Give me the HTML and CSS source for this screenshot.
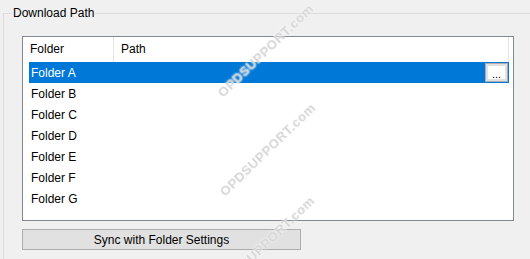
FILE: index.html
```html
<!DOCTYPE html>
<html lang="en">
<head>
    <meta charset="UTF-8">
    <title>Download Path</title>
    <link rel="stylesheet" href="styles.css">
</head>
<body>
    <div class="group">
        <span class="group-title">Download Path</span>
        <div class="list">
            <div class="list-header">
                <div class="col col-folder">Folder</div>
                <div class="col col-path">Path</div>
            </div>
            <div class="rows">
                <div class="row selected">
                    <span class="row-name">Folder A</span>
                    <button class="browse-btn">...</button>
                </div>
                <div class="row"><span class="row-name">Folder B</span></div>
                <div class="row"><span class="row-name">Folder C</span></div>
                <div class="row"><span class="row-name">Folder D</span></div>
                <div class="row"><span class="row-name">Folder E</span></div>
                <div class="row"><span class="row-name">Folder F</span></div>
                <div class="row"><span class="row-name">Folder G</span></div>
            </div>
        </div>
        <button class="sync-btn">Sync with Folder Settings</button>
    </div>

    <span class="watermark wm-1">OPDSUPPORT.com</span>
    <span class="watermark wm-2">OPDSUPPORT.com</span>
    <span class="watermark wm-3">OPDSUPPORT.com</span>
</body>
</html>
```

FILE: styles.css
```css
/* General */
body {
    margin: 0;
    background: #f0f0f0;
    font-family: "Liberation Sans", Arial, sans-serif;
    font-size: 12px;
    color: #000;
    overflow: hidden;
    width: 530px;
    height: 259px;
    position: relative;
}

/* Group box (right and bottom edges fall outside the window) */
.group {
    position: relative;
    margin: 13px 0 0 3px;
    width: 527px;
    height: 246px;
    border: 1px solid #dcdcdc;
    border-right: none;
    border-bottom: none;
    box-sizing: border-box;
    padding: 22px 0 0 18px;
}

.group-title {
    position: absolute;
    left: 8px;
    top: -9px;
    padding: 0 1px;
    background: #f0f0f0;
    line-height: 16px;
}

/* List view */
.list {
    width: 492px;
    height: 185px;
    border: 1px solid #828790;
    background: #fff;
    box-sizing: border-box;
}

.list-header {
    display: flex;
    height: 25px;
    width: 486px;
}

.col {
    line-height: 24px;
    padding-left: 7px;
    box-sizing: border-box;
}

.col-folder {
    width: 91px;
    border-right: 1px solid #e5e5e5;
}

.col-path {
    flex: 1;
    border-right: 1px solid #e5e5e5;
}

.rows {
    margin-left: 6px;
    width: 480px;
}

.row {
    display: flex;
    align-items: center;
    justify-content: space-between;
    height: 21px;
}

.row-name {
    padding-left: 2px;
}

.row.selected {
    background: #0078d7;
    color: #fff;
}

.browse-btn {
    width: 23px;
    height: 19px;
    margin-right: 1px;
    padding: 0;
    border: 1px solid #adadad;
    background: #fff;
    box-shadow: inset 0 0 0 2px #e1e1e1;
    font-family: "Liberation Sans", Arial, sans-serif;
    font-size: 11px;
    line-height: 20px;
    color: #000;
}

/* Sync button */
.sync-btn {
    display: block;
    margin-top: 8px;
    width: 279px;
    height: 21px;
    padding: 0;
    border: 1px solid #adadad;
    background: #e1e1e1;
    font-family: "Liberation Sans", Arial, sans-serif;
    font-size: 12px;
    color: #000;
}

/* Watermark overlay */
.watermark {
    position: absolute;
    width: 140px;
    text-align: center;
    font-size: 13px;
    font-weight: bold;
    letter-spacing: 0.5px;
    color: rgba(150, 150, 150, 0.4);
    text-shadow: 0 0 2px #fff, 0 0 1px #fff;
    transform: rotate(-44deg);
    filter: blur(0.5px);
    line-height: 14px;
}

.wm-1 { left: 196px; top: 44px; }
.wm-2 { left: 198px; top: 143px; }
.wm-3 { left: 197px; top: 236px; }
```
